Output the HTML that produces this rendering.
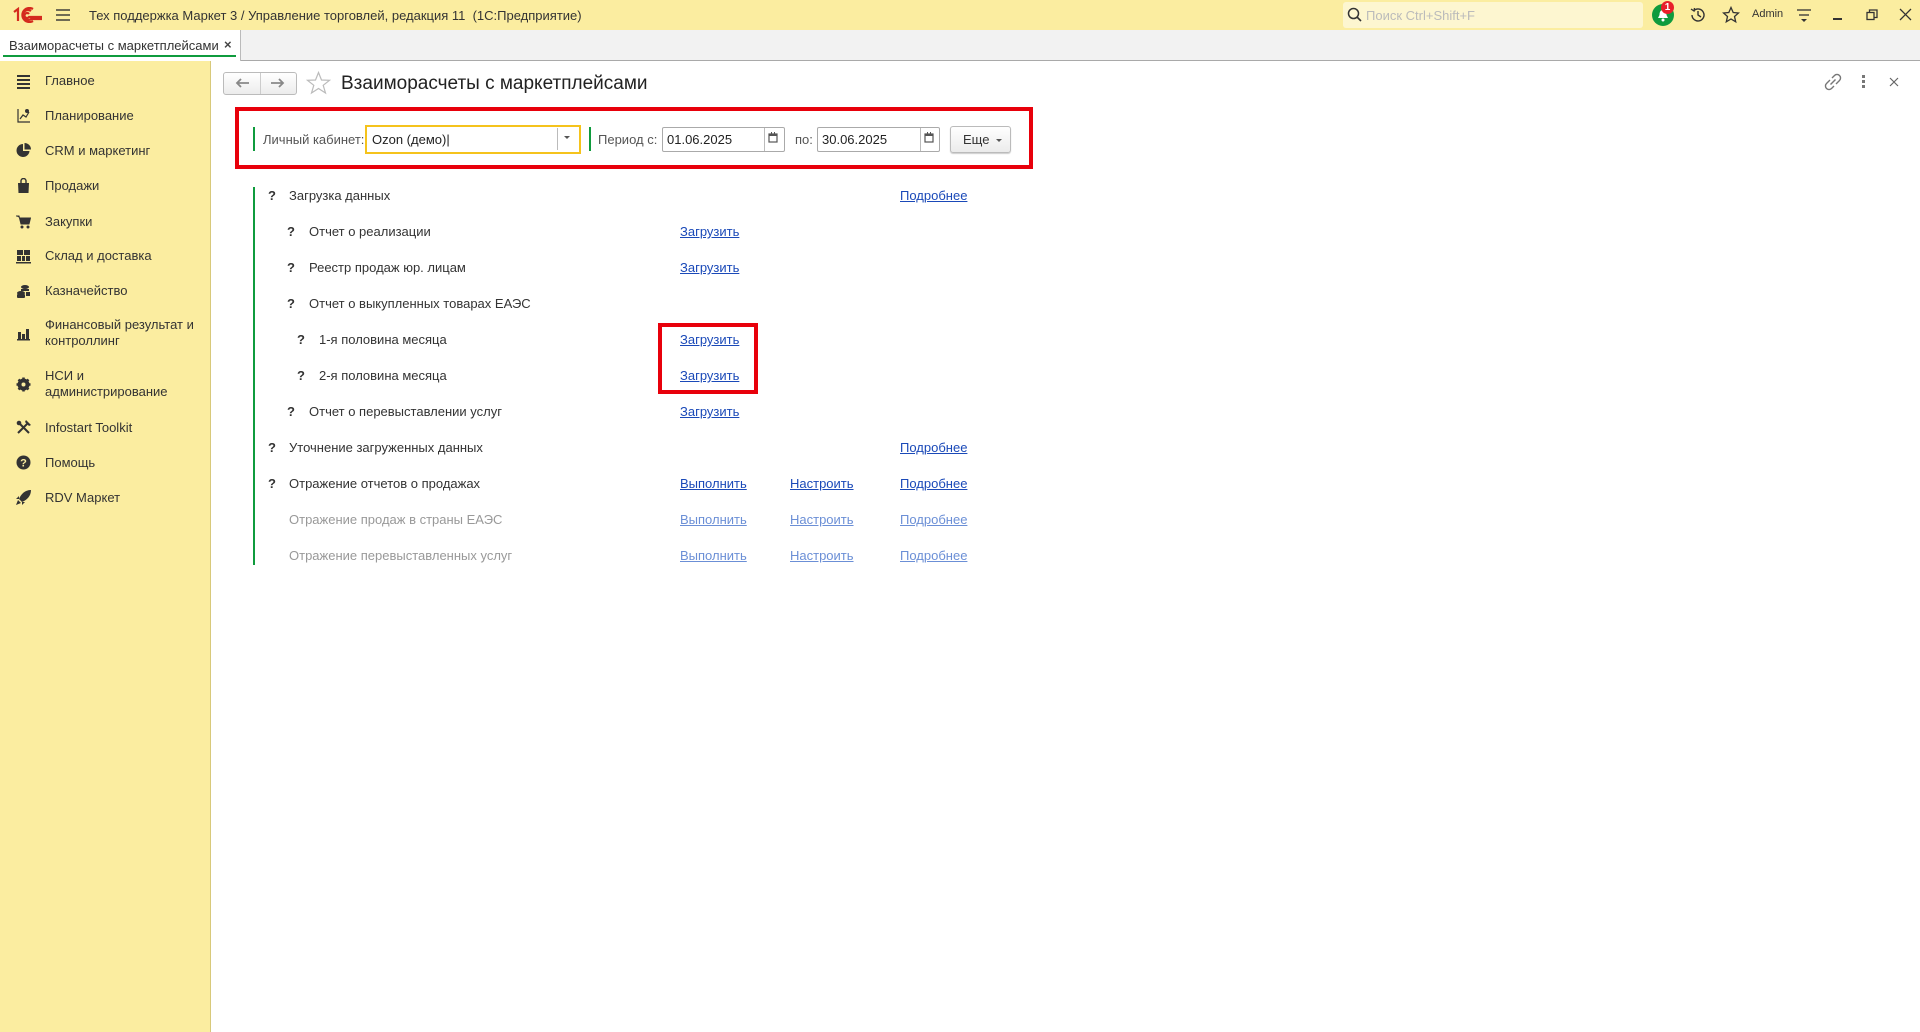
<!DOCTYPE html>
<html><head><meta charset="utf-8">
<style>
*{margin:0;padding:0;box-sizing:border-box}
body{width:1920px;height:1032px;overflow:hidden;background:#fff;font-family:"Liberation Sans",Arial,sans-serif;font-size:13px;color:#333;position:relative}
.a{position:absolute;white-space:nowrap}
#top{position:absolute;left:0;top:0;width:1920px;height:30px;background:#fbeda0}
#tabs{position:absolute;left:0;top:30px;width:1920px;height:31px;background:#f2f2f2;border-bottom:1px solid #a9a9a9}
#tab{position:absolute;left:0;top:0;width:241px;height:31px;background:#fff;border-right:1px solid #bbb}
#side{position:absolute;left:0;top:61px;width:211px;height:971px;background:#fbeda0;border-right:1px solid #d8c97a}
.si{position:absolute;left:45px;font-size:13px;color:#333;line-height:16px}
.ic{position:absolute;left:16px;width:15px;height:15px}
.q{font-weight:bold;color:#333}
.lnk{color:#1a49b8;text-decoration:underline}
.dis{color:#999}
.dlnk{color:#6b8fd6;text-decoration:underline}
.inp{position:absolute;background:#fff;border:1px solid #aaa;border-radius:2px;height:25px}
</style></head><body>
<div id="top">
 <svg class="a" style="left:12px;top:7px" width="32" height="16" viewBox="0 0 32 16"><g fill="none" stroke="#d42b1e" stroke-width="2.2"><path d="M2 5 L6 2 V14"/><path d="M19 4 A5 5 0 1 0 19 12 H30"/><path d="M17 7 A2.5 2.5 0 1 0 17 10 H30"/><path d="M21 2 A7 7 0 1 0 21 14"/></g></svg>
 <svg class="a" style="left:55px;top:8px" width="16" height="14"><g stroke="#333" stroke-width="1.4"><line x1="1" y1="2" x2="15" y2="2"/><line x1="1" y1="7" x2="15" y2="7"/><line x1="1" y1="12" x2="15" y2="12"/></g></svg>
 <div class="a" style="left:89px;top:8px;font-size:13px;color:#333">Тех поддержка Маркет 3 / Управление торговлей, редакция 11&nbsp; (1С:Предприятие)</div>
 <div class="a" style="left:1343px;top:2px;width:300px;height:26px;background:#fdf6d0;border-radius:3px"></div>
 <svg class="a" style="left:1347px;top:7px" width="16" height="16"><circle cx="6.5" cy="6.5" r="5" fill="none" stroke="#333" stroke-width="1.5"/><line x1="10" y1="10" x2="14" y2="14" stroke="#333" stroke-width="1.6"/></svg>
 <div class="a" style="left:1366px;top:8px;color:#bbb">Поиск Ctrl+Shift+F</div>
 <div class="a" style="left:1652px;top:4px;width:22px;height:22px;border-radius:11px;background:#0f9b3d"></div>
 <svg class="a" style="left:1656px;top:8px" width="14" height="14"><path d="M7 2 C4 2 3.5 5 3.5 7 L2 10 H12 L10.5 7 C10.5 5 10 2 7 2Z" fill="#fff"/><circle cx="7" cy="12" r="1.5" fill="#fff"/></svg>
 <div class="a" style="left:1661px;top:1px;width:13px;height:13px;border-radius:7px;background:#e8202a;color:#fff;font-size:10px;font-weight:bold;text-align:center;line-height:13px">1</div>
 <svg class="a" style="left:1689px;top:6px" width="18" height="18"><path d="M3 9 A6 6 0 1 0 5 4.5" fill="none" stroke="#333" stroke-width="1.4"/><path d="M2 3 L5 5 L5.5 2" fill="none" stroke="#333" stroke-width="1.3"/><path d="M9 5 V9 L12 11" fill="none" stroke="#333" stroke-width="1.4"/></svg>
 <svg class="a" style="left:1722px;top:6px" width="18" height="18"><path d="M9 1.5 L11.2 6.5 L16.5 7 L12.5 10.5 L13.7 15.8 L9 13 L4.3 15.8 L5.5 10.5 L1.5 7 L6.8 6.5Z" fill="none" stroke="#333" stroke-width="1.3"/></svg>
 <div class="a" style="left:1752px;top:8px;font-size:11px;color:#333">Admin</div>
 <svg class="a" style="left:1796px;top:7px" width="16" height="17"><g stroke="#333" stroke-width="1.3"><line x1="1" y1="3" x2="15" y2="3"/><line x1="3" y1="8" x2="13" y2="8"/></g><path d="M5 12 H11 L8 15Z" fill="#333"/></svg>
 <div class="a" style="left:1833px;top:18px;width:9px;height:1.5px;background:#333"></div>
 <svg class="a" style="left:1866px;top:9px" width="12" height="12"><rect x="1" y="3.5" width="7" height="7" fill="none" stroke="#333" stroke-width="1.3"/><path d="M3.5 3.5 V1 H11 V8.5 H8" fill="none" stroke="#333" stroke-width="1.3"/></svg>
 <svg class="a" style="left:1899px;top:8px" width="13" height="13"><path d="M1 1 L12 12 M12 1 L1 12" stroke="#333" stroke-width="1.3"/></svg>
</div>
<div id="tabs"><div id="tab">
 <div class="a" style="left:9px;top:8px;font-size:13px;color:#333">Взаиморасчеты с маркетплейсами</div>
 <div class="a" style="left:224px;top:7px;font-size:13px;font-weight:bold;color:#444">×</div>
 <div class="a" style="left:3px;top:25px;width:233px;height:2px;background:#0f9b3d"></div>
</div></div>
<div id="side">
 <svg class="ic" style="top:13px" viewBox="0 0 15 15"><g fill="#333"><rect x="1" y="1" width="13" height="2"/><rect x="1" y="5" width="13" height="2"/><rect x="1" y="9" width="13" height="2"/><rect x="1" y="13" width="13" height="2"/></g></svg>
 <div class="si" style="top:12px">Главное</div>
 <svg class="ic" style="top:47px" viewBox="0 0 15 15"><g fill="none" stroke="#333" stroke-width="1.2"><path d="M2 1 V14 H14"/><path d="M4 11 L7 7 L10 9 L13 4"/></g><circle cx="11" cy="3" r="2" fill="#333"/></svg>
 <div class="si" style="top:47px">Планирование</div>
 <svg class="ic" style="top:82px" viewBox="0 0 15 15"><path d="M7 1 A6.5 6.5 0 1 0 13.5 8 H7Z" fill="#333"/><path d="M8.5 0 V6.5 H15 A6.5 6.5 0 0 0 8.5 0Z" fill="#333"/></svg>
 <div class="si" style="top:82px">CRM и маркетинг</div>
 <svg class="ic" style="top:117px" viewBox="0 0 15 15"><path d="M2 5 H13 L12.5 15 H2.5Z" fill="#333"/><path d="M5 5 V3 A2.5 2.5 0 0 1 10 3 V5" fill="none" stroke="#333" stroke-width="1.4"/></svg>
 <div class="si" style="top:117px">Продажи</div>
 <svg class="ic" style="top:153px" viewBox="0 0 15 15"><path d="M0 2 H3 L5 10 H13 L14.5 4 H4" fill="#333" stroke="#333" stroke-width="1"/><circle cx="6" cy="13" r="1.5" fill="#333"/><circle cx="12" cy="13" r="1.5" fill="#333"/></svg>
 <div class="si" style="top:153px">Закупки</div>
 <svg class="ic" style="top:188px" viewBox="0 0 15 15"><g fill="#333"><rect x="1" y="1" width="6" height="5"/><rect x="8" y="1" width="6" height="5"/><rect x="1" y="7" width="4" height="5"/><rect x="6" y="7" width="3" height="5"/><rect x="10" y="7" width="4" height="5"/><rect x="0" y="13" width="15" height="1.5"/></g></svg>
 <div class="si" style="top:187px">Склад и доставка</div>
 <svg class="ic" style="top:223px" viewBox="0 0 15 15"><g fill="#333"><ellipse cx="9" cy="3" rx="4" ry="2"/><rect x="5" y="5" width="8" height="2"/><ellipse cx="5" cy="9" rx="4" ry="2"/><rect x="1" y="10" width="8" height="4" rx="1"/><rect x="10" y="8" width="4" height="4"/></g></svg>
 <div class="si" style="top:222px">Казначейство</div>
 <svg class="ic" style="top:265px" viewBox="0 0 15 15"><g fill="#333"><rect x="2" y="6" width="3" height="7"/><rect x="6" y="8" width="3" height="5"/><rect x="10" y="3" width="3" height="10"/><rect x="1" y="13" width="13" height="1.5"/></g></svg>
 <div class="si" style="top:256px">Финансовый результат и<br>контроллинг</div>
 <svg class="ic" style="top:316px" viewBox="0 0 15 15"><circle cx="7.5" cy="7.5" r="4.5" fill="none" stroke="#333" stroke-width="3"/><g stroke="#333" stroke-width="2.5"><line x1="7.5" y1="0.5" x2="7.5" y2="14.5"/><line x1="0.5" y1="7.5" x2="14.5" y2="7.5"/><line x1="2.5" y1="2.5" x2="12.5" y2="12.5"/><line x1="12.5" y1="2.5" x2="2.5" y2="12.5"/></g><circle cx="7.5" cy="7.5" r="2" fill="#fbeda0"/></svg>
 <div class="si" style="top:307px">НСИ и<br>администрирование</div>
 <svg class="ic" style="top:359px" viewBox="0 0 15 15"><g stroke="#333" stroke-width="2"><line x1="2" y1="13" x2="12" y2="3"/><line x1="3" y1="3" x2="13" y2="13"/></g><path d="M10 0 L15 5 L13 6 L9 2Z" fill="#333"/><circle cx="3" cy="3" r="2.3" fill="#333"/></svg>
 <div class="si" style="top:359px">Infostart Toolkit</div>
 <svg class="ic" style="top:394px" viewBox="0 0 15 15"><circle cx="7.5" cy="7.5" r="7" fill="#333"/><text x="7.5" y="11.5" text-anchor="middle" font-size="11" font-weight="bold" fill="#fbeda0" font-family="Liberation Sans">?</text></svg>
 <div class="si" style="top:394px">Помощь</div>
 <svg class="ic" style="top:429px" viewBox="0 0 15 15"><path d="M15 0 C9 0 5 4 3 9 L6 12 C11 10 15 6 15 0Z" fill="#333"/><path d="M3 6 L0 9 L3 9Z M6 15 L6 12 L9 12Z M2 10 L0 15 L5 13Z" fill="#333"/></svg>
 <div class="si" style="top:429px">RDV Маркет</div>
</div>

<div class="a" style="left:223px;top:72px;width:74px;height:23px;border:1px solid #bbb;border-radius:3px;background:linear-gradient(#fff,#ececec)"></div>
<div class="a" style="left:260px;top:73px;width:1px;height:21px;background:#ccc"></div>
<svg class="a" style="left:234px;top:76px" width="16" height="14"><path d="M15 7 H3 M7 3 L3 7 L7 11" fill="none" stroke="#888" stroke-width="1.8"/></svg>
<svg class="a" style="left:270px;top:76px" width="16" height="14"><path d="M1 7 H13 M9 3 L13 7 L9 11" fill="none" stroke="#888" stroke-width="1.8"/></svg>
<svg class="a" style="left:306px;top:71px" width="25" height="24"><path d="M12.5 1.5 L15.5 9 L23.5 9.3 L17.2 14.3 L19.5 22 L12.5 17.5 L5.5 22 L7.8 14.3 L1.5 9.3 L9.5 9Z" fill="none" stroke="#bbb" stroke-width="1.2"/></svg>
<div class="a" style="left:341px;top:73px;font-size:19px;color:#222">Взаиморасчеты с маркетплейсами</div>
<svg class="a" style="left:1824px;top:73px" width="18" height="18"><g fill="none" stroke="#777" stroke-width="1.4"><path d="M8 5 L10.5 2.5 A2.5 2.5 0 0 1 15.5 7.5 L12 11"/><path d="M10 13 L7.5 15.5 A2.5 2.5 0 0 1 2.5 10.5 L6 7"/><line x1="6.5" y1="11.5" x2="11.5" y2="6.5"/></g></svg>
<div class="a" style="left:1862px;top:75px;width:3px;height:3px;background:#777;box-shadow:0 5px 0 #777,0 10px 0 #777"></div>
<svg class="a" style="left:1889px;top:77px" width="10" height="10"><path d="M1 1 L9 9 M9 1 L1 9" stroke="#666" stroke-width="1.2"/></svg>

<div class="a" style="left:235px;top:107px;width:798px;height:62px;border:4px solid #e8000b"></div>
<div class="a" style="left:253px;top:127px;width:2px;height:24px;background:#0f9b3d"></div>
<div class="a" style="left:263px;top:132px;color:#555">Личный кабинет:</div>
<div class="a" style="left:365px;top:125px;width:216px;height:29px;border:2px solid #f5c31c;background:#fff"></div>
<div class="a" style="left:372px;top:132px;color:#222">Ozon (демо)|</div>
<div class="a" style="left:557px;top:128px;width:1px;height:22px;background:#bbb"></div>
<div class="a" style="left:564px;top:136px;border-left:3px solid transparent;border-right:3px solid transparent;border-top:3px solid #555"></div>
<div class="a" style="left:589px;top:127px;width:2px;height:24px;background:#0f9b3d"></div>
<div class="a" style="left:598px;top:132px;color:#555">Период с:</div>
<div class="inp" style="left:662px;top:127px;width:123px"></div>
<div class="a" style="left:667px;top:132px;color:#222">01.06.2025</div>
<div class="a" style="left:764px;top:128px;width:1px;height:23px;background:#bbb"></div>
<svg class="a" style="left:768px;top:132px" width="10" height="11"><rect x="1" y="2" width="8" height="8" fill="none" stroke="#555" stroke-width="1.2"/><rect x="1" y="2" width="8" height="2" fill="#555"/><rect x="3" y="0" width="1" height="2" fill="#555"/><rect x="6" y="0" width="1" height="2" fill="#555"/></svg>
<div class="a" style="left:795px;top:132px;color:#555">по:</div>
<div class="inp" style="left:817px;top:127px;width:123px"></div>
<div class="a" style="left:822px;top:132px;color:#222">30.06.2025</div>
<div class="a" style="left:920px;top:128px;width:1px;height:23px;background:#bbb"></div>
<svg class="a" style="left:924px;top:132px" width="10" height="11"><rect x="1" y="2" width="8" height="8" fill="none" stroke="#555" stroke-width="1.2"/><rect x="1" y="2" width="8" height="2" fill="#555"/><rect x="3" y="0" width="1" height="2" fill="#555"/><rect x="6" y="0" width="1" height="2" fill="#555"/></svg>
<div class="a" style="left:950px;top:126px;width:61px;height:27px;border:1px solid #bbb;border-radius:3px;background:linear-gradient(#fff,#ebebeb);box-shadow:0 1px 1px #ccc"></div>
<div class="a" style="left:963px;top:132px;color:#333">Еще</div>
<div class="a" style="left:996px;top:139px;border-left:3px solid transparent;border-right:3px solid transparent;border-top:3px solid #555"></div>

<div class="a" style="left:253px;top:187px;width:2px;height:378px;background:#0f9b3d"></div>
<div class="a q" style="left:268px;top:188px">?</div><div class="a" style="left:289px;top:188px">Загрузка данных</div><div class="a lnk" style="left:900px;top:188px">Подробнее</div>
<div class="a q" style="left:287px;top:224px">?</div><div class="a" style="left:309px;top:224px">Отчет о реализации</div><div class="a lnk" style="left:680px;top:224px">Загрузить</div>
<div class="a q" style="left:287px;top:260px">?</div><div class="a" style="left:309px;top:260px">Реестр продаж юр. лицам</div><div class="a lnk" style="left:680px;top:260px">Загрузить</div>
<div class="a q" style="left:287px;top:296px">?</div><div class="a" style="left:309px;top:296px">Отчет о выкупленных товарах ЕАЭС</div>
<div class="a q" style="left:297px;top:332px">?</div><div class="a" style="left:319px;top:332px">1-я половина месяца</div><div class="a lnk" style="left:680px;top:332px">Загрузить</div>
<div class="a q" style="left:297px;top:368px">?</div><div class="a" style="left:319px;top:368px">2-я половина месяца</div><div class="a lnk" style="left:680px;top:368px">Загрузить</div>
<div class="a" style="left:658px;top:323px;width:100px;height:71px;border:4px solid #e8000b"></div>
<div class="a q" style="left:287px;top:404px">?</div><div class="a" style="left:309px;top:404px">Отчет о перевыставлении услуг</div><div class="a lnk" style="left:680px;top:404px">Загрузить</div>
<div class="a q" style="left:268px;top:440px">?</div><div class="a" style="left:289px;top:440px">Уточнение загруженных данных</div><div class="a lnk" style="left:900px;top:440px">Подробнее</div>
<div class="a q" style="left:268px;top:476px">?</div><div class="a" style="left:289px;top:476px">Отражение отчетов о продажах</div><div class="a lnk" style="left:680px;top:476px">Выполнить</div><div class="a lnk" style="left:790px;top:476px">Настроить</div><div class="a lnk" style="left:900px;top:476px">Подробнее</div>
<div class="a dis" style="left:289px;top:512px">Отражение продаж в страны ЕАЭС</div><div class="a dlnk" style="left:680px;top:512px">Выполнить</div><div class="a dlnk" style="left:790px;top:512px">Настроить</div><div class="a dlnk" style="left:900px;top:512px">Подробнее</div>
<div class="a dis" style="left:289px;top:548px">Отражение перевыставленных услуг</div><div class="a dlnk" style="left:680px;top:548px">Выполнить</div><div class="a dlnk" style="left:790px;top:548px">Настроить</div><div class="a dlnk" style="left:900px;top:548px">Подробнее</div>
</body></html>
